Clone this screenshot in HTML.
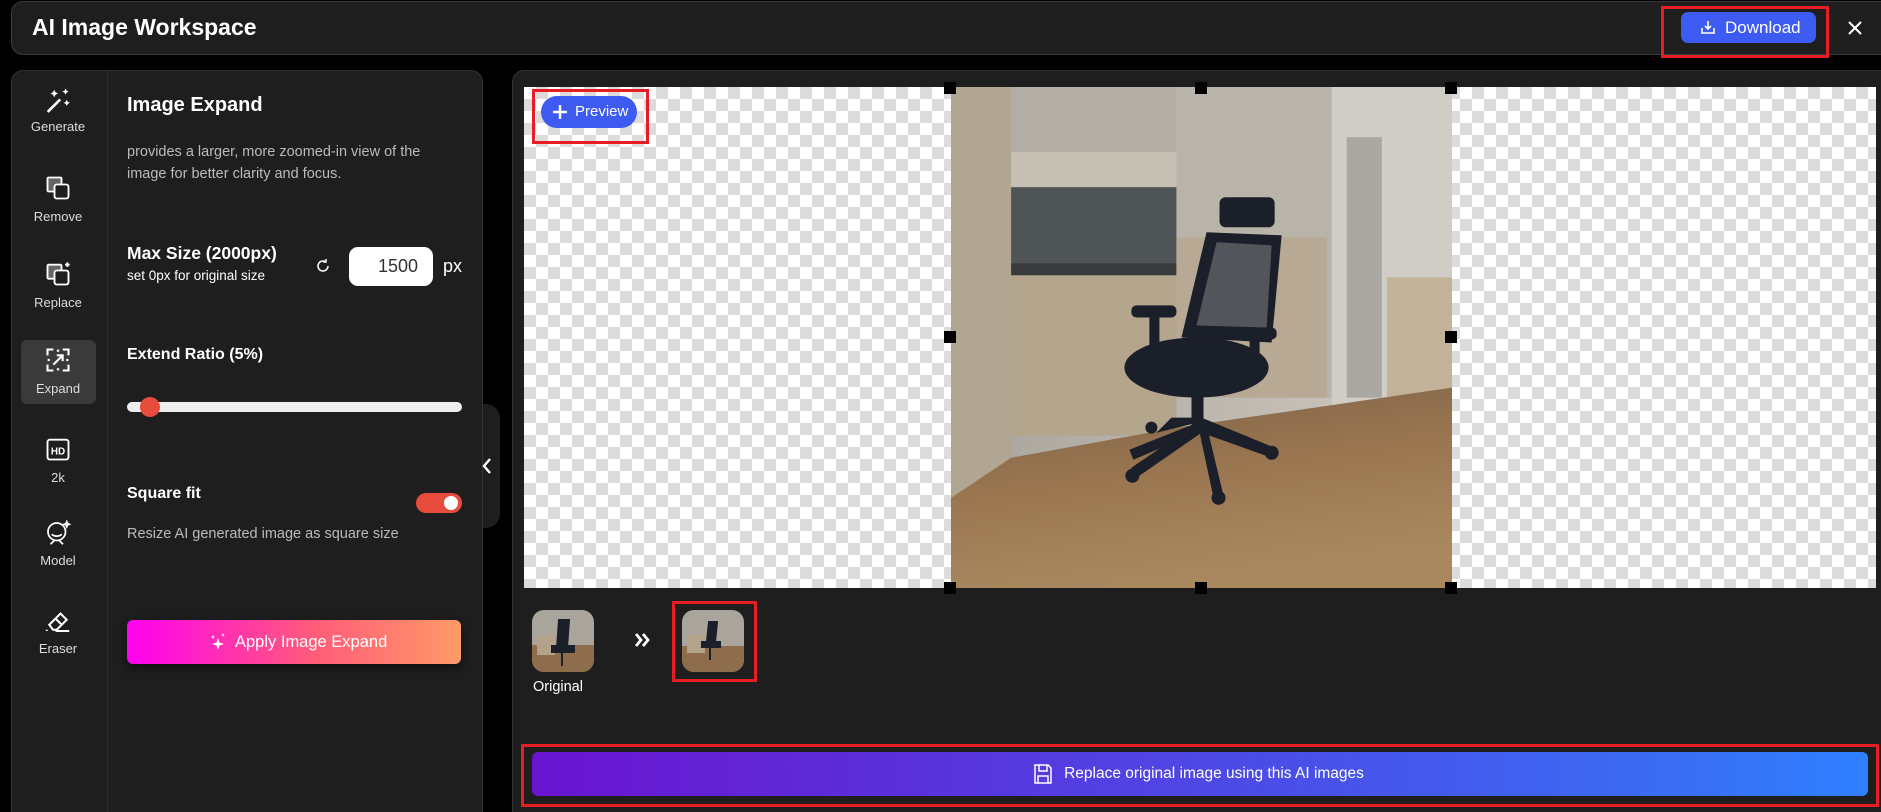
<!DOCTYPE html>
<html><head><meta charset="utf-8"><style>
*{box-sizing:border-box;margin:0;padding:0}
html{width:1881px;height:812px;overflow:hidden;background:#000}
body{width:1881px;height:812px;background:#000;font-family:"Liberation Sans",Arial,sans-serif;color:#fff;position:relative;overflow:hidden}
.abs{position:absolute}
.red{position:absolute;border:3px solid #e81c24}
.hdr{left:11px;top:1px;width:1900px;height:54px;background:#1e1e1e;border:1px solid #3a3a3a;border-radius:12px}
.lp{left:11px;top:70px;width:472px;height:742px;background:#1e1e1e;border:1px solid #333;border-bottom:none;border-radius:12px 12px 0 0}
.rp{left:512px;top:70px;width:1380px;height:742px;background:#1e1e1e;border:1px solid #333;border-bottom:none;border-radius:12px 0 0 0}
.nav{position:absolute;left:0;width:96px;text-align:center;font-size:13px;color:#ddd}
.checker{background-color:#fff;background-image:conic-gradient(#dcdcdc 25%,#fff 0 50%,#dcdcdc 0 75%,#fff 0);background-size:24px 24px}
.h{position:absolute;width:12px;height:12px;background:#000}
</style></head><body>
<div class="abs hdr"></div>
<div class="abs" style="left:32px;top:14px;font-size:23px;font-weight:bold">AI Image Workspace</div>
<div class="abs" style="left:1681px;top:12px;width:135px;height:31px;background:#3d5af1;border-radius:7px;font-size:17px;line-height:31px;padding-left:44px">Download</div>
<svg class="abs" style="left:1700px;top:19px" width="16" height="16" viewBox="0 0 16 16" fill="none" stroke="#fff" stroke-width="1.6"><path d="M8 2v8M5 7l3 3 3-3M2 9v5h12V9"/></svg>
<div class="red" style="left:1661px;top:6px;width:168px;height:52px"></div>
<svg class="abs" style="left:1847px;top:20px" width="16" height="16" viewBox="0 0 16 16" stroke="#fff" stroke-width="2"><path d="M2 2l12 12M14 2L2 14"/></svg>

<div class="abs lp"></div>
<div class="abs" style="left:107px;top:71px;width:1px;height:741px;background:#2e2e2e"></div>
<div class="abs" style="left:21px;top:340px;width:75px;height:64px;background:#3a3a3a;border-radius:6px"></div>
<div class="nav" style="left:10px;top:86px"><svg width="30" height="30" viewBox="0 0 24 24" fill="#fff"><path d="M3 20l10-10 1.5 1.5-10 10z"/><path d="M9 3l1 2 2 1-2 1-1 2-1-2-2-1 2-1zM18 2l.8 1.7L20.5 4.5l-1.7.8L18 7l-.8-1.7L15.5 4.5l1.7-.8zM19 11l.8 1.7 1.7.8-1.7.8L19 16l-.8-1.7-1.7-.8 1.7-.8z"/></svg><div>Generate</div></div>
<div class="nav" style="left:10px;top:174px"><svg width="28" height="28" viewBox="0 0 24 24" fill="none" stroke="#fff" stroke-width="1.6"><rect x="3" y="3" width="12" height="12" rx="1" fill="#666"/><rect x="9" y="9" width="12" height="12" rx="2" fill="#1e1e1e"/></svg><div style="margin-top:4px">Remove</div></div>
<div class="nav" style="left:10px;top:260px"><svg width="28" height="28" viewBox="0 0 24 24" fill="none" stroke="#fff" stroke-width="1.6"><rect x="3" y="4" width="12" height="12" rx="1" fill="#666"/><rect x="9" y="9" width="12" height="12" rx="2" fill="#1e1e1e"/><path d="M20 2v4M18 4h4"/></svg><div style="margin-top:4px">Replace</div></div>
<div class="nav" style="left:10px;top:346px"><svg width="28" height="28" viewBox="0 0 24 24" fill="none" stroke="#fff" stroke-width="1.8"><path d="M3 8V3h5M16 3h5v5M21 16v5h-5M8 21H3v-5M13 4h-2M4 11v2M20 11v2M11 20h2"/><path d="M8 16l8-8M11 8h5v5"/></svg><div style="margin-top:4px">Expand</div></div>
<div class="nav" style="left:10px;top:435px"><svg width="28" height="28" viewBox="0 0 24 24" fill="none" stroke="#fff" stroke-width="1.6"><rect x="3" y="4" width="18" height="17" rx="2"/><text x="12" y="16.5" font-size="8.5" font-weight="bold" fill="#fff" stroke="none" text-anchor="middle" font-family="Liberation Sans">HD</text></svg><div style="margin-top:4px">2k</div></div>
<div class="nav" style="left:10px;top:518px"><svg width="30" height="30" viewBox="0 0 24 24" fill="none" stroke="#fff" stroke-width="1.4"><circle cx="11" cy="11" r="7"/><path d="M7 13c2 2 6 2 8 0M6 21l3-3M16 21l-3-3M19 3l.6 1.4L21 5l-1.4.6L19 7l-.6-1.4L17 5l1.4-.6z"/></svg><div style="margin-top:2px">Model</div></div>
<div class="nav" style="left:10px;top:606px"><svg width="30" height="30" viewBox="0 0 24 24" fill="none" stroke="#fff" stroke-width="1.6"><path d="M5 15l9-9 5 5-8 8H8z M10 10l5 5M10 20h11M3 19v1"/></svg><div style="margin-top:2px">Eraser</div></div>

<div class="abs" style="left:127px;top:94px;font-size:20px;font-weight:bold">Image Expand</div>
<div class="abs" style="left:127px;top:141px;font-size:14.5px;line-height:22px;color:#bbb;width:320px">provides a larger, more zoomed-in view of the image for better clarity and focus.</div>
<div class="abs" style="left:127px;top:243px;font-size:17.5px;font-weight:bold">Max Size (2000px)</div>
<div class="abs" style="left:127px;top:268px;font-size:13.5px">set 0px for original size</div>
<svg class="abs" style="left:314px;top:257px" width="18" height="18" viewBox="0 0 18 18" fill="none" stroke="#fff" stroke-width="1.5"><path d="M14 9a5 5 0 1 1-2-4"/><path d="M12 2v3h-3" /></svg>
<div class="abs" style="left:349px;top:247px;width:84px;height:39px;background:#fff;border-radius:9px;color:#333;font-size:18px;line-height:39px;text-align:right;padding-right:15px">1500</div>
<div class="abs" style="left:443px;top:256px;font-size:18px">px</div>
<div class="abs" style="left:127px;top:346px;font-size:16px;font-weight:bold">Extend Ratio (5%)</div>
<div class="abs" style="left:127px;top:402px;width:335px;height:10px;background:#eee;border-radius:5px"></div>
<div class="abs" style="left:140px;top:397px;width:20px;height:20px;background:#e74c3c;border-radius:50%"></div>
<div class="abs" style="left:483px;top:404px;width:17px;height:124px;background:#1e1e1e;border-radius:0 14px 14px 0"></div>
<svg class="abs" style="left:480px;top:456px" width="14" height="20" viewBox="0 0 14 20" fill="none" stroke="#fff" stroke-width="2.4"><path d="M10 3l-6 7 6 7"/></svg>
<div class="abs" style="left:127px;top:485px;font-size:16px;font-weight:bold">Square fit</div>
<div class="abs" style="left:416px;top:493px;width:46px;height:20px;background:#e74c3c;border-radius:10px"></div>
<div class="abs" style="left:444px;top:496px;width:14px;height:14px;background:#fff;border-radius:50%"></div>
<div class="abs" style="left:127px;top:526px;font-size:14.5px;color:#bbb">Resize AI generated image as square size</div>
<div class="abs" style="left:127px;top:620px;width:334px;height:44px;border-radius:6px;background:linear-gradient(90deg,#ff00f0,#ff5a7a 55%,#ff9a66);box-shadow:0 4px 10px rgba(0,0,0,.5);font-size:16.5px;line-height:44px;padding-left:108px">Apply Image Expand</div>
<svg class="abs" style="left:210px;top:632px" width="18" height="20" viewBox="0 0 18 20" fill="#fff"><path d="M8 6l1.5 4.5L14 12l-4.5 1.5L8 18l-1.5-4.5L2 12l4.5-1.5zM3 3l.6 1.4L5 5l-1.4.6L3 7l-.6-1.4L1 5l1.4-.6zM13 1l.5 1.5L15 3l-1.5.5L13 5l-.5-1.5L11 3l1.5-.5z"/></svg>

<div class="abs rp"></div>
<div class="abs checker" style="left:524px;top:87px;width:1352px;height:501px"></div>
<svg class="abs" style="left:951px;top:87px" width="501" height="501" viewBox="0 0 500 500">
<defs><linearGradient id="fl" x1="0" y1="0" x2="0.3" y2="1"><stop offset="0" stop-color="#7a6048"/><stop offset=".5" stop-color="#9a7650"/><stop offset="1" stop-color="#a98860"/></linearGradient>
<linearGradient id="wl" x1="0" y1="0" x2="1" y2="0"><stop offset="0" stop-color="#a8a49c"/><stop offset="1" stop-color="#cfcbc3"/></linearGradient></defs>
<rect width="500" height="500" fill="url(#wl)"/>
<rect x="0" y="0" width="60" height="410" fill="#b1a692"/>
<rect x="60" y="0" width="165" height="70" fill="#b3afa7"/>
<rect x="60" y="65" width="165" height="35" fill="#c6c0b4"/>
<rect x="60" y="100" width="165" height="80" fill="#4f5457"/>
<rect x="60" y="176" width="165" height="12" fill="#3a3b3c"/>
<rect x="60" y="188" width="165" height="160" fill="#b4a58d"/>
<rect x="225" y="0" width="155" height="310" fill="#b9b4aa"/>
<rect x="225" y="150" width="150" height="160" fill="#b7a994"/>
<rect x="380" y="0" width="120" height="320" fill="#cfcdc6"/>
<rect x="395" y="50" width="35" height="260" fill="#a9a8a3"/>
<rect x="435" y="190" width="65" height="130" fill="#c2b298"/>
<path d="M0 410 L60 370 L225 340 L500 300 L500 500 L0 500z" fill="url(#fl)"/>
<g fill="#1b1f29">
<rect x="268" y="110" width="55" height="30" rx="6"/>
<path d="M255 145 L330 148 L320 255 L230 250z"/>
<ellipse cx="245" cy="280" rx="72" ry="30"/>
<rect x="180" y="218" width="45" height="12" rx="5"/><rect x="198" y="225" width="10" height="40"/>
<rect x="280" y="240" width="45" height="12" rx="5"/><rect x="298" y="245" width="10" height="45"/>
<rect x="240" y="300" width="12" height="40"/>
<path d="M246 335 L180 380 L185 390 L250 345 L320 370 L323 360 L250 330 L220 330 L205 345z"/>
<path d="M246 335 L262 410 L272 408 L254 333z"/>
<path d="M246 335 L178 362 L182 372 L250 343z"/>
<circle cx="181" cy="388" r="7"/><circle cx="267" cy="410" r="7"/><circle cx="320" cy="365" r="7"/><circle cx="200" cy="340" r="6"/>
</g>
<path d="M265 155 L320 158 L315 240 L245 238z" fill="#6c6c70" opacity=".7"/>
</svg>
<div class="h" style="left:944px;top:82px"></div><div class="h" style="left:1195px;top:82px"></div><div class="h" style="left:1445px;top:82px"></div>
<div class="h" style="left:944px;top:331px"></div><div class="h" style="left:1445px;top:331px"></div>
<div class="h" style="left:944px;top:582px"></div><div class="h" style="left:1195px;top:582px"></div><div class="h" style="left:1445px;top:582px"></div>

<div class="abs" style="left:541px;top:96px;width:96px;height:32px;background:#3d5af1;border-radius:16px;font-size:15px;line-height:32px;padding-left:34px">Preview</div>
<svg class="abs" style="left:552px;top:104px" width="16" height="16" viewBox="0 0 16 16" stroke="#fff" stroke-width="2.4"><path d="M8 1v14M1 8h14"/></svg>
<div class="red" style="left:532px;top:89px;width:117px;height:55px"></div>

<svg class="abs" style="left:532px;top:610px" width="62" height="62" viewBox="0 0 62 62"><defs><clipPath id="c1"><rect width="62" height="62" rx="12"/></clipPath></defs><g clip-path="url(#c1)"><rect width="62" height="62" fill="#aaa59c"/><rect y="35" width="62" height="27" fill="#8d6d4c"/><rect x="5" y="25" width="18" height="20" fill="#b3a38a"/><path d="M27 10h10l-2 28h-10z M20 36h22v6H20z M30 42v14" fill="#1b1f29" stroke="#1b1f29" stroke-width="2"/></g></svg>
<div class="abs" style="left:533px;top:679px;font-size:14.5px">Original</div>
<svg class="abs" style="left:633px;top:631px" width="18" height="18" viewBox="0 0 18 18" fill="none" stroke="#fff" stroke-width="2.8"><path d="M3 3l5 6-5 6M10 3l5 6-5 6"/></svg>
<svg class="abs" style="left:682px;top:610px" width="62" height="62" viewBox="0 0 62 62"><defs><clipPath id="c2"><rect width="62" height="62" rx="12"/></clipPath></defs><g clip-path="url(#c2)"><rect width="62" height="62" fill="#aaa59c"/><rect y="36" width="62" height="26" fill="#8d6d4c"/><rect x="5" y="25" width="18" height="18" fill="#b3a38a"/><path d="M27 12h8l-2 20h-8z M20 32h18v5H20z M28 37v13" fill="#1b1f29" stroke="#1b1f29" stroke-width="2"/></g></svg>
<div class="red" style="left:672px;top:601px;width:85px;height:81px"></div>

<div class="abs" style="left:532px;top:752px;width:1336px;height:44px;border-radius:6px;background:linear-gradient(90deg,#6a14cf,#3a6cf4 85%,#2f80ff);font-size:15.5px;line-height:44px;text-align:center;padding-left:28px">Replace original image using this AI images</div>
<svg class="abs" style="left:1033px;top:763px" width="20" height="22" viewBox="0 0 20 22" fill="none" stroke="#fff" stroke-width="1.5"><path d="M2 2h13l3 3v15H2z M6 2v6h8V2 M5 20v-7h10v7"/></svg>
<div class="red" style="left:521px;top:744px;width:1358px;height:63px"></div>
</body></html>
